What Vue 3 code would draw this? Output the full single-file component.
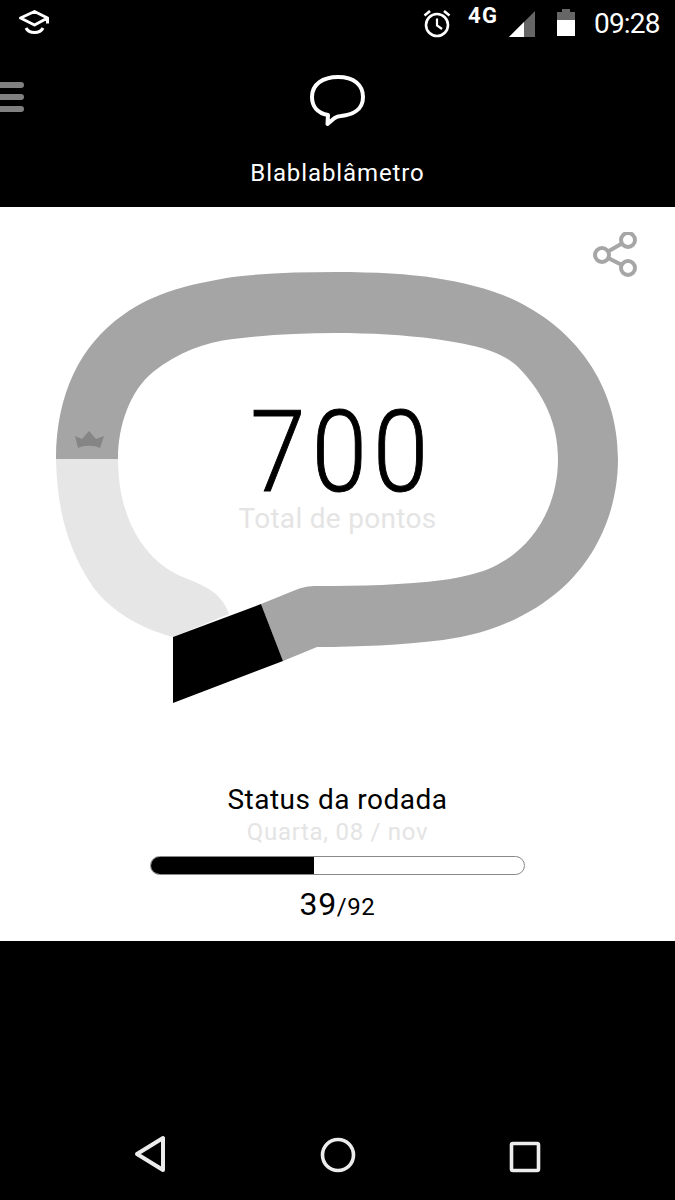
<template>
  <div class="phone">
    <div class="statusbar">
      <svg class="cap" width="30" height="26" viewBox="0 0 30 26">
        <path d="M1.500 8 L15.500 1.500 L28.500 8 L15.500 15 Z M28.500 8 V13.500" fill="none" stroke="#fff" stroke-width="3" stroke-linejoin="round"/>
        <path d="M7 18 C10 24 21 24 24 18" fill="none" stroke="#fff" stroke-width="3"/>
      </svg>
      <svg class="alarm" width="30" height="30" viewBox="0 0 30 30">
        <circle cx="15" cy="16" r="11" fill="none" stroke="#fff" stroke-width="2.600"/>
        <path d="M15 9.500 V16.500 L20 20" fill="none" stroke="#fff" stroke-width="2.200"/>
        <path d="M2.500 6.500 L8 2 M27.500 6.500 L22 2" fill="none" stroke="#fff" stroke-width="2.600"/>
      </svg>
      <span class="net">4G</span>
      <svg class="signal" width="26" height="26" viewBox="0 0 26 26">
        <path d="M0 26 L26 0 V26 Z" fill="#666"/>
        <path d="M0 26 L15 11 V26 Z" fill="#fff"/>
      </svg>
      <svg class="battery" width="18" height="27" viewBox="0 0 18 27">
        <path d="M5 0 H13 V3 H18 V11 H0 V3 H5 Z" fill="#666"/>
        <rect x="0" y="11" width="18" height="16" fill="#fff"/>
      </svg>
      <span class="clock">09:28</span>
    </div>

    <div class="header">
      <div class="burger"><i></i><i></i><i></i></div>
      <svg width="60" height="54" viewBox="0 0 60 54">
        <path d="M30 3 C46 3 55 11 55 23 C55 36 44 41 33 42 C29 42 28 43 26 44.500 L19.500 50 L20 41 C9 39 4 32 4 23 C4 10 15 3 30 3 Z" fill="none" stroke="#fff" stroke-width="4" stroke-linejoin="round"/>
      </svg>
      <div class="title">Blablablâmetro</div>
    </div>

    <div class="main">
      <div class="gauge">
        <svg class="ring" width="675" height="540" viewBox="0 207 675 540">
          <path d="M56 459 C56 395 80 345 123 315 C155 292 190 284 233 277 C265 273 300 272 336 272 C375 272 410 274 435 278 C462 282 490 289 510 298 C575 327 618 385 618 459 C618 510 597 558 560 590 C530 616 490 634 443 640 C400 645 360 647 317 647 L283 661 L261 604 L293 591 C302 587 309 586 317 586 C360 586 405 585 443 580 C462 577.500 480 573 493 567 C530 550 558 510 558 459 C558 425 545 395 519 368 C503 352 478 345 435 339 C405 335 370 333 336 333 C300 333 265 335 233 339 C205 342.500 178 352 153 372 C130 391 118 425 118 459 Z" fill="#a5a5a5"/>
          <path d="M56 459 C57 510 68 550 93 587 C112 612 140 628 173 637 L229 614 C224 600 216 593 207 588 C198 583 190 580 183 577 C150 564 118 525 118 459 Z" fill="#e6e6e6"/>
          <path d="M173 637 L261 604 L283 661 L173 703 Z" fill="#000"/>
          <path d="M75 436 L82 439 L89 431 L96 439 L104 436 L100 448 C94 445 84 445 78 448 Z" fill="#858585"/>
        </svg>
        <div class="score">
          <div class="points">700</div>
          <div class="points-label">Total de pontos</div>
        </div>
        <svg class="share" width="46" height="46" viewBox="0 0 46 46">
          <path d="M10 23 L36 8 M10 23 L36 36" stroke="#a6a6a6" stroke-width="4"/>
          <circle cx="10" cy="23" r="7" fill="#fff" stroke="#a6a6a6" stroke-width="4"/>
          <circle cx="36" cy="8" r="7" fill="#fff" stroke="#a6a6a6" stroke-width="4"/>
          <circle cx="36" cy="36" r="7" fill="#fff" stroke="#a6a6a6" stroke-width="4"/>
        </svg>
      </div>

      <div class="round">
        <div class="round-title">Status da rodada</div>
        <div class="round-date">Quarta, 08 / nov</div>
        <div class="bar"><div class="bar-fill"></div></div>
        <div class="count"><span class="count-done">39</span>/92</div>
      </div>
    </div>

    <div class="navbar">
      <svg width="32" height="38" viewBox="0 0 32 38">
        <path d="M3 19 L29 3 V35 Z" fill="none" stroke="#ececec" stroke-width="4" stroke-linejoin="round"/>
      </svg>
      <svg width="36" height="36" viewBox="0 0 36 36">
        <circle cx="18" cy="18" r="15.500" fill="none" stroke="#ececec" stroke-width="3.600"/>
      </svg>
      <svg width="32" height="32" viewBox="0 0 32 32">
        <rect x="2.500" y="2.500" width="27" height="27" rx="1.500" fill="none" stroke="#ececec" stroke-width="3.600"/>
      </svg>
    </div>
  </div>
</template>

<script setup>
</script>

<style>
html, body { margin: 0; background: #000; }
</style>

<style scoped>
.phone {
  width: 675px;
  height: 1200px;
  background: #000;
  font-family: Roboto, "Liberation Sans", sans-serif;
  overflow: hidden;
}

.statusbar {
  height: 48px;
  display: flex;
  align-items: flex-start;
  color: #fff;
}
.cap { margin: 10px 0 0 19px; }
.alarm { margin: 9px 0 0 373px; }
.net { margin: 4px 0 0 16px; width: 41px; font-size: 22px; font-weight: 700; line-height: 24px; letter-spacing: 1.500px; }
.signal { margin: 11px 0 0 0; }
.battery { margin: 9px 0 0 22px; }
.clock { margin: 7px 0 0 19px; font-size: 28px; line-height: 34px; letter-spacing: -0.800px; }

.header {
  height: 159px;
  position: relative;
  display: flex;
  flex-direction: column;
  align-items: center;
  color: #fff;
}
.header svg { margin-top: 26px; }
.title { margin-top: 29px; font-size: 24px; line-height: 32px; letter-spacing: 0.900px; }
.burger {
  position: absolute;
  left: -6px;
  top: 34px;
  display: flex;
  flex-direction: column;
  gap: 6px;
}
.burger i { display: block; width: 30px; height: 6px; border-radius: 3px; background: #808080; }

.main { height: 734px; background: #fff; }

.gauge { height: 540px; position: relative; }
.ring { display: block; }
.share { position: absolute; left: 592px; top: 25px; }
.score {
  position: absolute;
  left: 0;
  right: 0;
  top: 196px;
  text-align: center;
}
.points {
  padding-left: 11px;
  font-size: 113px;
  font-weight: 300;
  line-height: 100px;
  letter-spacing: 7px;
  color: #000;
  -webkit-text-stroke: 1px #000;
  transform: scaleX(0.88);
}
.points-label { font-size: 28px; line-height: 32px; color: #e4e4e4; letter-spacing: 0.300px; }

.round {
  padding-top: 35px;
  display: flex;
  flex-direction: column;
  align-items: center;
}
.round-title { font-size: 28px; line-height: 36px; color: #000; letter-spacing: 0.500px; }
.round-date { font-size: 24px; line-height: 30px; margin-top: -1px; color: #e4e4e4; letter-spacing: 0.700px; }
.bar {
  margin-top: 9px;
  width: 375px;
  height: 19px;
  box-sizing: border-box;
  border: 1px solid #888;
  border-radius: 10px;
  overflow: hidden;
}
.bar-fill { width: 43.700%; height: 100%; background: #000; }
.count { margin-top: 10px; font-size: 24px; line-height: 38px; color: #000; letter-spacing: 0.600px; }
.count-done { font-size: 32px; }

.navbar {
  height: 259px;
  display: flex;
  align-items: flex-end;
  padding: 0 134px 27px 134px;
  box-sizing: border-box;
  justify-content: space-between;
}
</style>
